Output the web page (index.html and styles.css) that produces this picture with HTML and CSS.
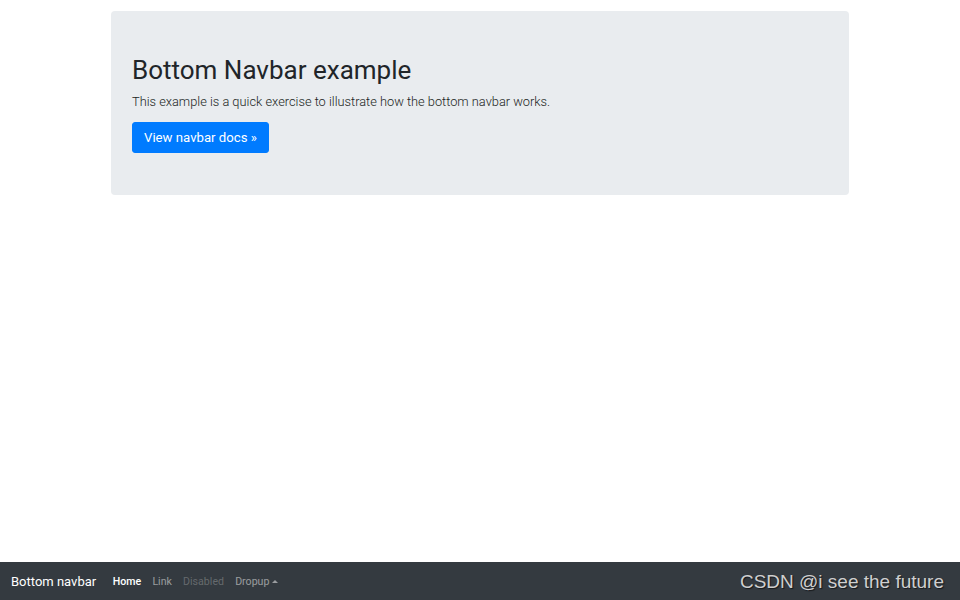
FILE: index.html
```html
<!DOCTYPE html>
<html lang="en">
<head>
<meta charset="utf-8">
<title>Bottom navbar example</title>
<link rel="stylesheet" href="styles.css">
</head>
<body>
<main class="page">
  <div class="jumbotron">
    <h1 class="title">Bottom Navbar example</h1>
    <p class="lead">This example is a quick exercise to illustrate how the bottom navbar works.</p>
    <a class="btn" href="#">View navbar docs &raquo;</a>
  </div>
</main>
<nav class="navbar">
  <a class="brand" href="#">Bottom navbar</a>
  <ul class="nav">
    <li><a class="nav-link active" href="#">Home</a></li>
    <li><a class="nav-link" href="#">Link</a></li>
    <li><a class="nav-link disabled" href="#">Disabled</a></li>
    <li><a class="nav-link dropup" href="#">Dropup<span class="caret"></span></a></li>
  </ul>
  <span class="watermark">CSDN @i see the future</span>
</nav>
</body>
</html>
```

FILE: styles.css
```css
* { box-sizing: border-box; }
html, body { margin: 0; padding: 0; }
body {
  height: 100vh;
  display: flex;
  flex-direction: column;
  font-family: Roboto, "Noto Sans", sans-serif;
  color: #212529;
  background: #fff;
}
.page {
  flex: 1;
  padding-top: 11px;
}
.jumbotron {
  width: 738px;
  margin: 0 auto;
  background: #e9ecef;
  border-radius: 4px;
  padding: 44px 21px 42px;
}
.title {
  margin: 0 0 5px;
  font-size: 26px;
  line-height: 31px;
  font-weight: 400;
}
.lead {
  margin: 0 0 10px;
  font-size: 12.8px;
  line-height: 21px;
  font-weight: 300;
  color: #1b1f23;
}
.btn {
  display: inline-block;
  background: #007bff;
  color: #fff;
  text-decoration: none;
  font-size: 13.2px;
  line-height: 21px;
  padding: 4px 11px;
  border: 1px solid #007bff;
  border-radius: 3px;
}
.navbar {
  position: relative;
  height: 38px;
  background: #343a40;
  display: flex;
  align-items: center;
  padding: 0 11px;
}
.brand {
  color: #fff;
  text-decoration: none;
  font-size: 13px;
  line-height: 21px;
  margin-right: 11px;
}
.nav {
  list-style: none;
  margin: 0;
  padding: 0;
  display: flex;
}
.nav-link {
  display: flex;
  align-items: center;
  padding: 0 5.6px;
  font-size: 10.6px;
  line-height: 17px;
  color: rgba(255,255,255,.5);
  text-decoration: none;
}
.nav-link.active { color: #fff; font-weight: 500; }
.nav-link.disabled { color: rgba(255,255,255,.25); }
.caret {
  display: inline-block;
  margin-left: 3px;
  width: 0;
  height: 0;
  border-left: 3px solid transparent;
  border-right: 3px solid transparent;
  border-bottom: 3px solid rgba(255,255,255,.5);
}
.watermark {
  position: absolute;
  right: 16px;
  top: 8px;
  font-family: "Liberation Sans", Arial, sans-serif;
  font-size: 19px;
  line-height: 24px;
  color: #cfcfcf;
  text-shadow: 1px 1px 1px rgba(0,0,0,.6);
}
```
